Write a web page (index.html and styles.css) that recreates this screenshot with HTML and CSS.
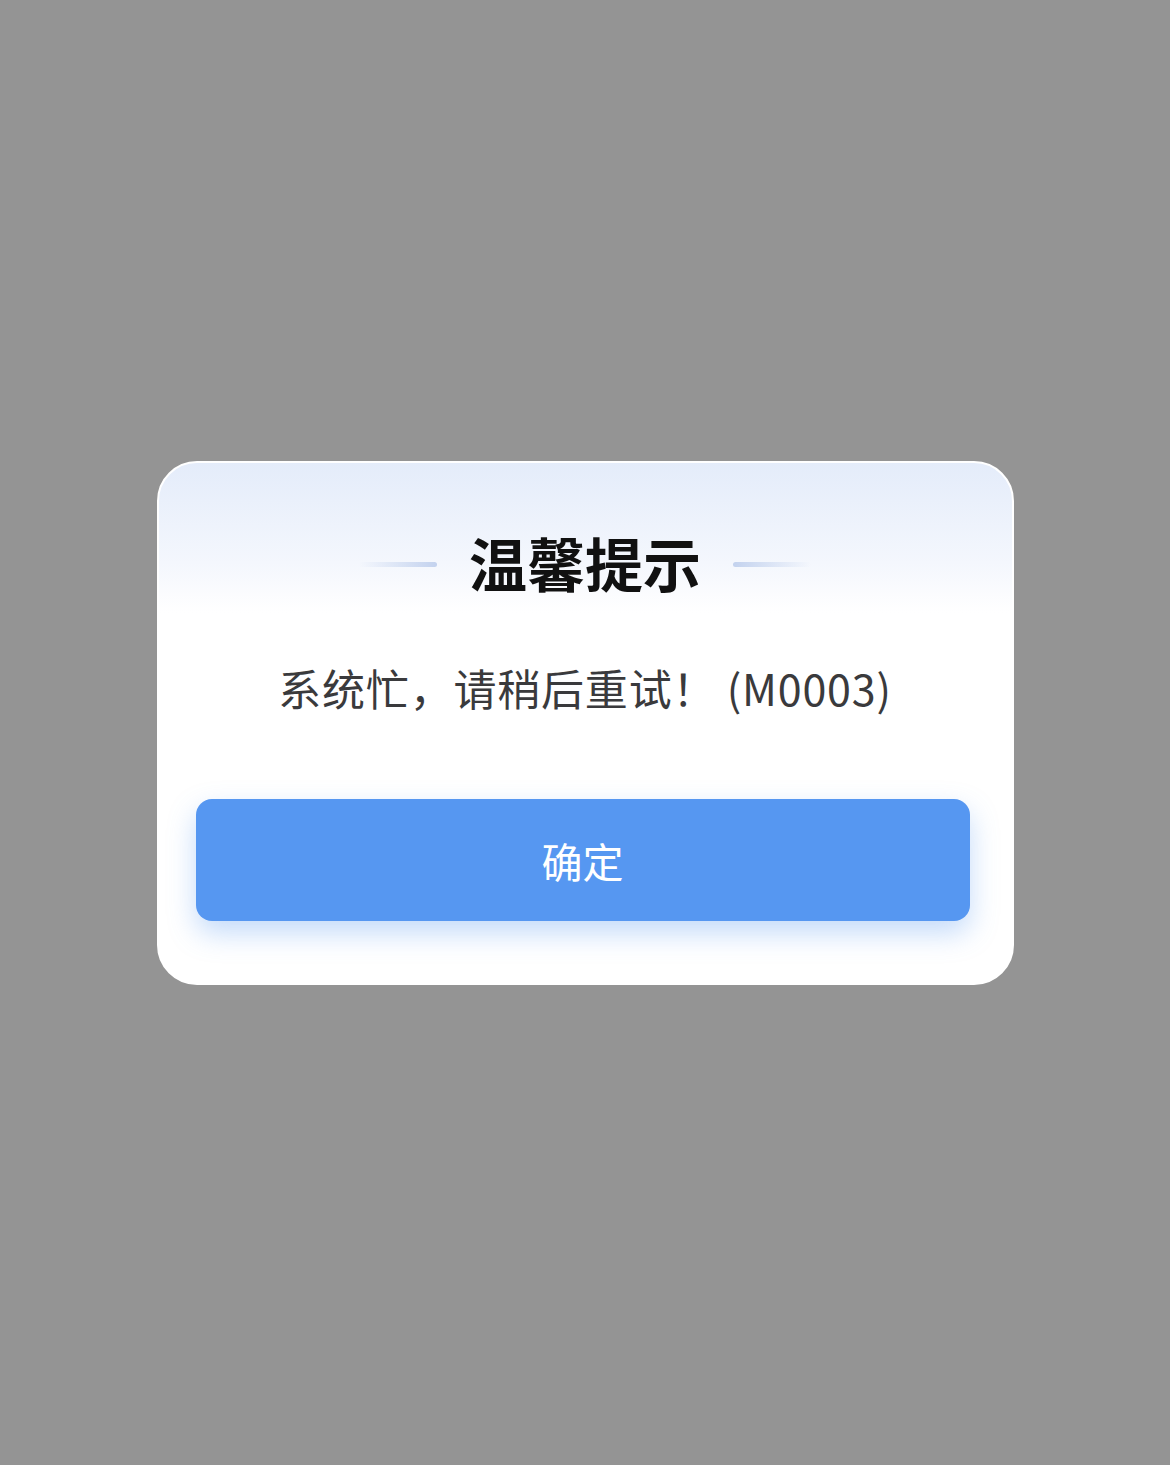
FILE: index.html
```html
<!DOCTYPE html>
<html>
  <head>
    <meta charset="utf-8" />
    <title>温馨提示</title>
    <meta name="viewport" content="width=device-width,initial-scale=1" />
    <link rel="stylesheet" href="styles.css">
  </head>
  <body>
    <div class="dialog">
      <div class="dialog-title">
        <span class="title-line left"></span>
        <h2>温馨提示</h2>
        <span class="title-line right"></span>
      </div>
      <p class="dialog-message">系统忙，请稍后重试！ (M0003)</p>
      <button class="confirm-button">确定</button>
    </div>
  </body>
</html>
```

FILE: styles.css
```css
html, body {
  height: 100%;
}

body {
  margin: 0;
  background: #949494;
  font-family: "Noto Sans CJK SC", "Noto Sans", sans-serif;
  display: flex;
  flex-direction: column;
  align-items: center;
}

.dialog {
  margin-top: 461px;
  width: 857px;
  box-sizing: border-box;
  padding: 61px 37px 62px;
  border: 2px solid #fff;
  border-radius: 40px;
  background: linear-gradient(180deg, #e4ecfa 0px, #f4f7fd 100px, #ffffff 150px);
  display: flex;
  flex-direction: column;
  align-items: center;
}

.dialog-title {
  display: flex;
  align-items: center;
  gap: 32px;
  height: 76px;
}

.dialog-title h2 {
  margin: 0;
  font-size: 58px;
  font-weight: 700;
  color: #111;
  line-height: 76px;
}

.title-line {
  width: 78px;
  height: 5px;
  border-radius: 3px;
  margin-top: 4px;
}

.title-line.left {
  background: linear-gradient(90deg, rgba(197, 211, 238, 0), #c3d2ee);
}

.title-line.right {
  background: linear-gradient(90deg, #c3d2ee, rgba(197, 211, 238, 0));
}

.dialog-message {
  margin: 59px 0 0;
  font-size: 43px;
  line-height: 56px;
  letter-spacing: 0.8px;
  color: #3a3a3c;
}

.confirm-button {
  align-self: flex-start;
  margin-top: 84px;
  width: 774px;
  height: 122px;
  border: none;
  border-radius: 16px;
  background: #5697f1;
  color: #fff;
  font-family: inherit;
  font-size: 41px;
  box-shadow: 0 12px 28px rgba(86, 151, 241, 0.35);
}
```
